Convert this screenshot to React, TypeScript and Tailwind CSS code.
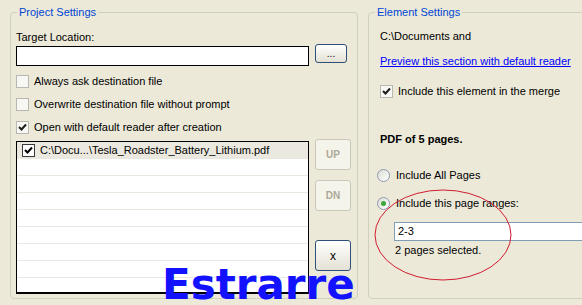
import React from "react"

const font = { fontFamily: '"Liberation Sans", Arial, sans-serif' }

function Check({ dark = false }: { dark?: boolean }) {
    return (
        <svg width="9" height="9" viewBox="0 0 9 9" className="block">
            <path d="M1 4 L3.5 6.5 L8 1.5" fill="none" stroke={dark ? "#000" : "#1d1d1d"} strokeWidth="2" />
        </svg>
    )
}

function CheckRow({ label, checked }: { label: string; checked?: boolean }) {
    return (
        <div className="flex h-[23px] items-center gap-[5px]">
            <span className="flex h-[13px] w-[13px] items-center justify-center border border-[#b9b8b0] bg-[#f7f7f3]">
                {checked && <Check />}
            </span>
            <span className="leading-[13px]">{label}</span>
        </div>
    )
}

function Radio({ label, selected }: { label: string; selected?: boolean }) {
    return (
        <div className="-ml-[3px] flex h-[23px] items-center gap-[6px]">
            <span className="flex h-[13px] w-[13px] items-center justify-center rounded-full border border-[#8e9bb0] bg-gradient-to-br from-[#dcdcd4] to-white">
                {selected && <span className="h-[5px] w-[5px] rounded-full bg-[#3aa83a]" />}
            </span>
            <span className="leading-[13px]">{label}</span>
        </div>
    )
}

function XpButton({ children, disabled, className = "" }: { children: React.ReactNode; disabled?: boolean; className?: string }) {
    return (
        <button
            className={
                disabled
                    ? `flex items-center justify-center rounded-[3px] border border-[#cac8bb] bg-[#f5f4ea] text-[10px] font-bold text-[#aca899] ${className}`
                    : `flex items-center justify-center rounded-[3px] border border-[#2d4f78] bg-gradient-to-b from-white to-[#e4e1d4] text-black ${className}`
            }
        >
            {children}
        </button>
    )
}

export default function App() {
    const rows = Array.from({ length: 8 })

    return (
        <div className="relative flex h-[305px] w-[582px] items-start overflow-hidden bg-[#ECE9D8] text-[11px] text-black" style={font}>
            {/* Project settings group */}
            <fieldset className="ml-[10px] mt-[5px] h-[294px] w-[348px] shrink-0 rounded-[4px] border border-[#d0d0bf]">
                <legend className="ml-[6px] px-[2px] leading-[14px] text-[#0046d5]">Project Settings</legend>
                <div className="pl-[5px]">
                    <div className="pt-[12px] leading-[13px]">Target Location:</div>
                    <div className="mt-[2px] flex items-start">
                        <div className="h-[20px] w-[293px] border border-black bg-white" />
                        <XpButton className="-mt-[2px] ml-[6px] h-[19px] w-[32px] text-[10px] text-[#333]">...</XpButton>
                    </div>
                    <div className="mt-[4px]">
                        <CheckRow label="Always ask destination file" />
                        <CheckRow label="Overwrite destination file without prompt" />
                        <CheckRow label="Open with default reader after creation" checked />
                    </div>
                    <div className="mt-[2px] flex items-start">
                        <div className="h-[153px] w-[293px] overflow-hidden border border-black border-b-2 bg-white">
                            {rows.map((_, i) => (
                                <div
                                    key={i}
                                    className={`flex h-[17px] items-center border-b border-[#e8e8e0] ${i === 0 ? "bg-[#ebe9df]" : ""}`}
                                >
                                    {i === 0 && (
                                        <>
                                            <span className="ml-[5px] flex h-[13px] w-[13px] items-center justify-center border border-[#3a3a3a] bg-white">
                                                <Check dark />
                                            </span>
                                            <span className="ml-[5px] leading-[13px]">C:\Docu...\Tesla_Roadster_Battery_Lithium.pdf</span>
                                        </>
                                    )}
                                </div>
                            ))}
                        </div>
                        <div className="ml-[6px] flex flex-col">
                            <XpButton disabled className="-mt-[2px] h-[31px] w-[36px]">UP</XpButton>
                            <XpButton disabled className="mt-[10px] h-[31px] w-[36px]">DN</XpButton>
                            <XpButton className="mt-[29px] h-[31px] w-[36px] text-[12px]">x</XpButton>
                        </div>
                    </div>
                </div>
            </fieldset>

            {/* Element settings group */}
            <fieldset className="ml-[10px] mt-[5px] h-[294px] w-[240px] shrink-0 rounded-[4px] border border-[#d0d0bf]">
                <legend className="ml-[6px] px-[2px] leading-[14px] text-[#0046d5]">Element Settings</legend>
                <div className="pl-[11px]">
                    <div className="pt-[11px] leading-[13px]">C:\Documents and</div>
                    <div className="mt-[12px] leading-[13px] text-[#0000ff] underline">Preview this section with default reader</div>
                    <div className="mt-[12px]">
                        <CheckRow label="Include this element in the merge" checked />
                    </div>
                    <div className="mt-[30px] font-bold leading-[13px]">PDF of 5 pages.</div>
                    <div className="mt-[18px]">
                        <Radio label="Include All Pages" />
                    </div>
                    <div className="mt-[5px]">
                        <Radio label="Include this page ranges:" selected />
                    </div>
                    <div className="ml-[14px] mt-[7px] flex h-[19px] w-[200px] items-center border border-[#7f9db9] bg-white pl-[3px]">2-3</div>
                    <div className="ml-[15px] mt-[3px] leading-[13px]">2 pages selected.</div>
                </div>
            </fieldset>

            {/* red annotation ring */}
            <svg className="pointer-events-none absolute left-0 top-0" width="582" height="305">
                <ellipse cx="443" cy="235" rx="68" ry="45" fill="none" stroke="#d21c30" strokeWidth="1" />
            </svg>

            {/* watermark */}
            <div
                className="pointer-events-none absolute left-[162px] top-[267px] text-[42px] font-bold leading-[36px] text-[#1212ff]"
                style={{ fontFamily: '"DejaVu Sans", Verdana, sans-serif' }}
            >
                Estrarre
            </div>
        </div>
    )
}
